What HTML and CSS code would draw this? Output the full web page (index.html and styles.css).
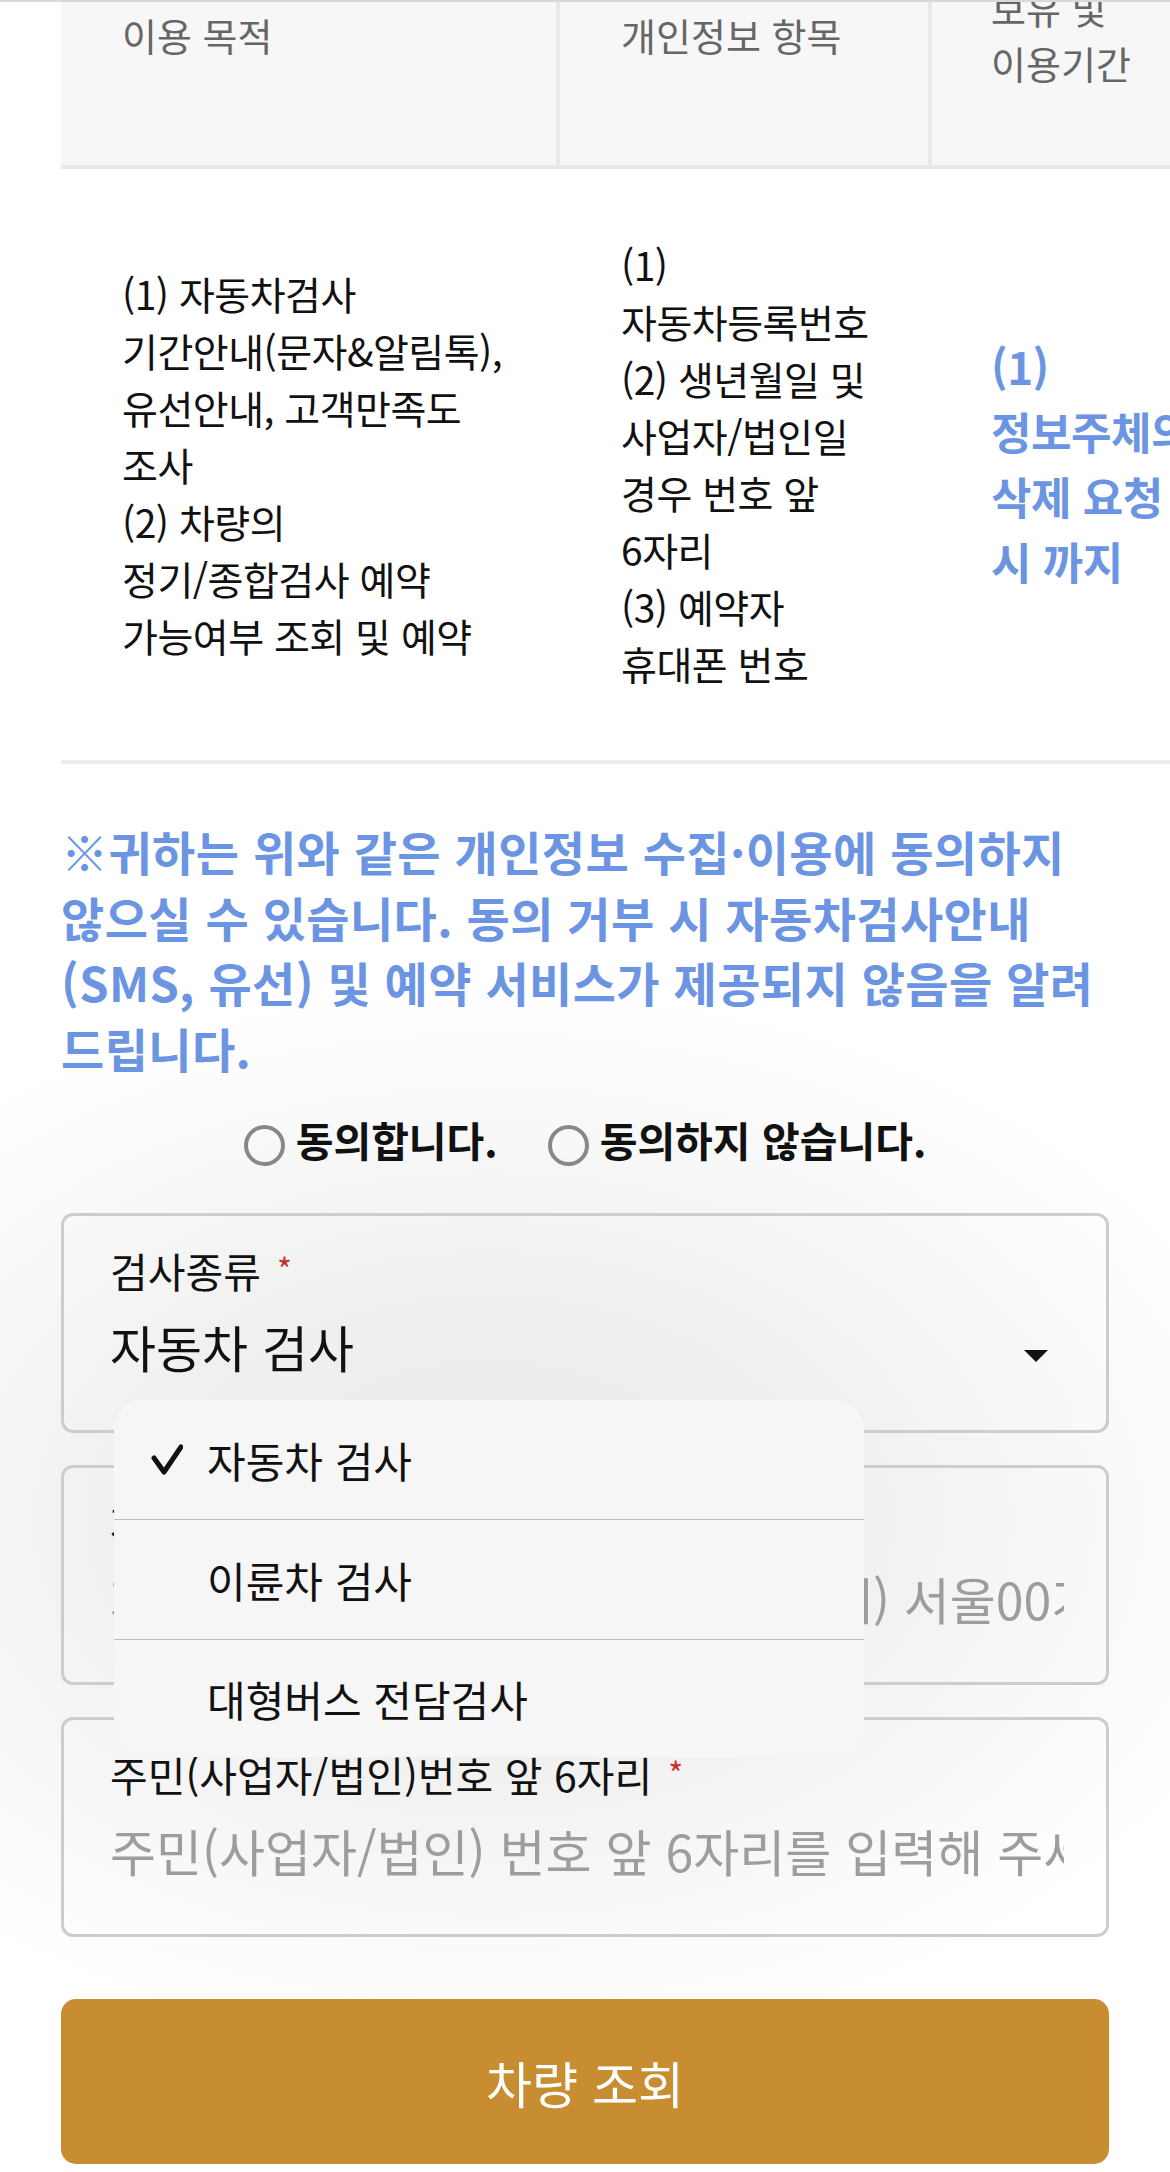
FILE: index.html
```html
<!DOCTYPE html>
<html lang="ko">
<head>
<meta charset="utf-8">
<title>자동차검사 예약</title>
<link rel="stylesheet" href="styles.css">
</head>
<body>
<div class="topline"></div>
<main class="page">
  <div class="table-wrap">
    <div class="terms">
      <div class="th">이용 목적</div>
      <div class="th">개인정보 항목</div>
      <div class="th">보유 및<br>이용기간</div>
      <div class="td">(1) 자동차검사<br>기간안내(문자&amp;알림톡),<br>유선안내, 고객만족도<br>조사<br>(2) 차량의<br>정기/종합검사 예약<br>가능여부 조회 및 예약</div>
      <div class="td">(1)<br>자동차등록번호<br>(2) 생년월일 및<br>사업자/법인일<br>경우 번호 앞<br>6자리<br>(3) 예약자<br>휴대폰 번호</div>
      <div class="td td-em">(1)<br>정보주체의<br>삭제 요청<br>시 까지</div>
    </div>
  </div>

  <p class="notice">※귀하는 위와 같은 개인정보 수집·이용에 동의하지<br>않으실 수 있습니다. 동의 거부 시 자동차검사안내<br>(SMS, 유선) 및 예약 서비스가 제공되지 않음을 알려<br>드립니다.</p>

  <div class="agree">
    <label class="radio"><span class="ring"></span>동의합니다.</label>
    <label class="radio"><span class="ring"></span>동의하지 않습니다.</label>
  </div>

  <form class="form">
    <div class="field">
      <div class="field-label">검사종류<span class="req">*</span></div>
      <div class="select-row">
        <span class="select-value">자동차 검사</span>
        <span class="caret"></span>
      </div>
    </div>
    <div class="field">
      <div class="field-label">자동차등록번호<span class="req">*</span></div>
      <input class="field-input" type="text" placeholder="자동차 등록번호를 입력해 주세요 (예) 서울00가0000">
    </div>
    <div class="field">
      <div class="field-label">주민(사업자/법인)번호 앞 6자리<span class="req">*</span></div>
      <input class="field-input" type="text" placeholder="주민(사업자/법인) 번호 앞 6자리를 입력해 주세요">
    </div>
    <button class="submit" type="button">차량 조회</button>

    <ul class="menu">
      <li class="menu-item">
        <span class="check"><svg width="32" height="31" viewBox="0 0 32 31"><path d="M3 14 L13 28 L30 3" fill="none" stroke="#111" stroke-width="5" stroke-linecap="round" stroke-linejoin="round"/></svg></span>
        자동차 검사
      </li>
      <li class="menu-item"><span class="check"></span>이륜차 검사</li>
      <li class="menu-item"><span class="check"></span>대형버스 전담검사</li>
    </ul>
  </form>
</main>
</body>
</html>
```

FILE: styles.css
```css
html {
  margin: 0;
  padding: 0;
  background: #ffffff;
}

body {
  margin: 0;
  padding: 0;
  font-family: "Noto Sans CJK KR", "Noto Sans", sans-serif;
  color: #111111;
  overflow: hidden;
}

.topline {
  position: absolute;
  top: 0;
  left: 0;
  right: 0;
  height: 2px;
  background: #d9d9d9;
  z-index: 5;
}

.page {
  padding: 0 61px 0 61px;
}

/* ---------- terms table ---------- */
.table-wrap {
  margin-right: -61px;
  margin-top: -96px;
  overflow: hidden;
}

.terms {
  display: grid;
  grid-template-columns: 499px 372px 238px;
  width: 1109px;
}

.th {
  box-sizing: border-box;
  height: 265px;
  display: flex;
  align-items: center;
  padding-left: 61px;
  background: #f7f7f7;
  border-bottom: 4px solid #e9e9e9;
  border-right: 4px solid #e9e9e9;
  color: #666666;
  font-size: 38px;
  line-height: 55px;
  white-space: nowrap;
}

.th:nth-child(3) {
  padding-left: 59px;
  border-right: 0;
}

.td {
  display: flex;
  align-items: center;
  padding: 67px 20px 68px 61px;
  border-bottom: 4px solid #ececec;
  font-size: 39px;
  line-height: 57px;
  letter-spacing: -0.5px;
  white-space: nowrap;
  color: #111111;
  overflow: hidden;
}

.td-em {
  padding: 67px 0 68px 59px;
  color: #6b95e3;
  font-weight: 700;
  font-size: 44px;
  line-height: 65px;
  letter-spacing: -0.5px;
}

/* ---------- notice ---------- */
.notice {
  margin: 54px 0 0;
  color: #6b95e3;
  font-weight: 700;
  font-size: 47px;
  line-height: 65.5px;
  letter-spacing: 0.4px;
  white-space: nowrap;
}

/* ---------- agree radios ---------- */
.agree {
  margin-top: 29px;
  height: 60px;
  display: flex;
  justify-content: center;
  align-items: center;
  gap: 50px;
}

.radio {
  display: flex;
  align-items: center;
  gap: 11px;
  font-weight: 700;
  font-size: 41px;
  line-height: 60px;
  color: #111111;
}

.ring {
  box-sizing: border-box;
  width: 41px;
  height: 41px;
  border: 4px solid #888888;
  border-radius: 50%;
  margin-top: 12px;
}

/* ---------- form ---------- */
.form {
  position: relative;
  margin-top: 44px;
  display: flex;
  flex-direction: column;
  gap: 32px;
}

.field {
  border: 3px solid #cdcdcd;
  border-radius: 12px;
  padding: 28px 42px 54px 46px;
  display: flex;
  flex-direction: column;
}

.field-label {
  font-size: 41px;
  line-height: 48px;
  color: #111111;
  white-space: nowrap;
}

.req {
  color: #c4312b;
  font-size: 32px;
  margin-left: 16px;
  vertical-align: 6px;
}

.select-row {
  margin-top: 22px;
  height: 60px;
  display: flex;
  align-items: center;
  justify-content: space-between;
}

.select-value {
  font-size: 50px;
  line-height: 60px;
  color: #111111;
}

.caret {
  width: 0;
  height: 0;
  border-left: 12px solid transparent;
  border-right: 12px solid transparent;
  border-top: 12px solid #111111;
  margin-right: 16px;
  margin-top: 20px;
}

.field-input {
  box-sizing: border-box;
  margin-top: 22px;
  height: 60px;
  padding: 0;
  border: 0;
  outline: none;
  background: transparent;
  font-family: inherit;
  font-size: 50px;
  color: #111111;
  width: 100%;
}

.field-input::placeholder {
  color: #9d9d9d;
}

.submit {
  margin-top: 30px;
  height: 165px;
  border: 0;
  border-radius: 15px;
  background: #c98d31;
  color: #ffffff;
  font-family: inherit;
  font-size: 50px;
  width: 100%;
}

/* ---------- open select menu (overlay) ---------- */
.menu {
  position: absolute;
  left: 53px;
  top: 187px;
  width: 750px;
  margin: 0;
  padding: 0;
  list-style: none;
  background: #f6f6f6;
  border-radius: 30px;
}

/* soft dimming that the open menu casts on the page below it */
.menu::before {
  content: "";
  position: absolute;
  top: -420px;
  right: -306px;
  bottom: -300px;
  left: -114px;
  z-index: -1;
  background: radial-gradient(815px 538px at 489px 538px, rgba(0, 0, 0, 0.085), rgba(0, 0, 0, 0.06) 45%, rgba(0, 0, 0, 0.02) 80%, rgba(0, 0, 0, 0) 100%);
  pointer-events: none;
}

.menu-item {
  height: 119px;
  display: flex;
  align-items: center;
  padding-left: 37px;
  border-bottom: 1px solid #bdbdbd;
  font-size: 42px;
  color: #111111;
}

.menu-item:last-child {
  border-bottom: 0;
  height: 117px;
}

.check {
  width: 56px;
  display: flex;
  align-items: center;
}
```
